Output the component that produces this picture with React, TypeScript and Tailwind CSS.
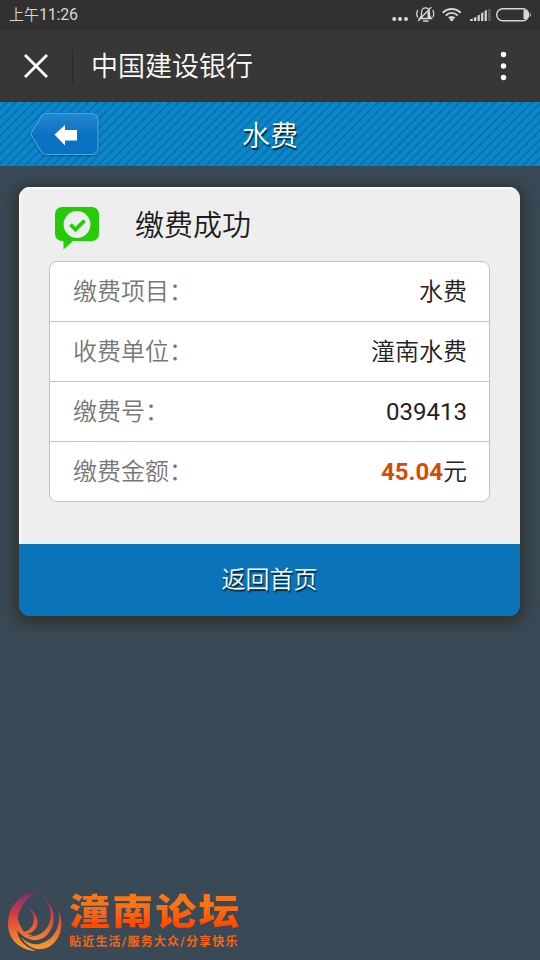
import React from 'react';

interface DetailRow {
  label: string;
  value: string;
  unit?: string;
  highlight?: boolean;
}

const rows: DetailRow[] = [
  { label: '缴费项目：', value: '水费' },
  { label: '收费单位：', value: '潼南水费' },
  { label: '缴费号：', value: '039413' },
  { label: '缴费金额：', value: '45.04', unit: '元', highlight: true },
];

function StatusBar() {
  return (
    <div className="flex h-[30px] items-center justify-between bg-[#313131] pl-[9px] pr-[7px] text-[#d8d8d8]">
      <span className="text-[15px] font-[350] leading-[30px]">
        上午<span className="text-base font-normal tracking-[-0.2px]">11:26</span>
      </span>
      <svg width="142" height="30" viewBox="0 0 142 30" fill="currentColor">
        <circle cx="3.2" cy="19" r="2" />
        <circle cx="9" cy="19" r="2" />
        <circle cx="15" cy="19" r="2" />
        <g fill="none" stroke="currentColor" strokeWidth="1.3" strokeLinecap="round">
          <path d="M28.5 18.5h12l-2-3v-3c0-3-2-4.6-4-4.6s-4 1.6-4 4.6v3zM27.5 20.5l12.5-13M32.5 21h4.5" />
          <path d="M26.5 10.5c-1 2-1 4.5 0 6.500M42 10.5c1 2 1 4.5 0 6.5" />
        </g>
        <path d="M36.5 10.5l2 2v3l2 3h-4z" />
        <g fill="none" stroke="currentColor" strokeWidth="1.9">
          <path d="M51.7 12.7c5.2-5 12.8-5 18 0" />
          <path d="M54.7 15.5c3.6-3.3 8.4-3.3 12 0" />
          <path d="M57.7 18.3c2-1.7 4-1.7 6 0" />
        </g>
        <circle cx="60.7" cy="19.5" r="1.7" />
        <path d="M79 21v-1.5l2.8-1V21zM83 21v-3.3l2.3-1V21zM86.6 21v-5.5l2.2-1V21zM90.1 21v-7.8l2.2-1.3V21z" />
        <path d="M93.6 21V11l2.2-1.2V21z" />
        <path d="M97 21V9h2.8v12z" opacity=".25" />
        <rect x="105.7" y="8.7" width="32" height="12" rx="6" fill="none" stroke="currentColor" strokeWidth="1.4" />
        <path d="M134 10.3h-1.5v8.8h1.5a3.6 4.4 0 0 0 0-8.8zM139 12.2q1.7 2.5 0 5z" />
      </svg>
    </div>
  );
}

function TitleBar() {
  return (
    <div className="flex h-[72px] items-center border-b-2 border-[#393631] bg-[#373737] pt-0.5 text-white">
      <svg className="ml-6" width="24" height="24" viewBox="0 0 24 24" stroke="currentColor" strokeWidth="2.8">
        <path d="M1 1l22 22M23 1L1 23" />
      </svg>
      <div className="ml-6 h-[35px] w-px bg-[#292929]" />
      <h1 className="ml-[18px] flex-1 pt-px text-[27px] font-[350] leading-9">中国建设银行</h1>
      <svg className="mr-8" width="9" height="30" viewBox="0 0 9 30" fill="currentColor">
        <circle cx="4.5" cy="3.5" r="2.7" />
        <circle cx="4.5" cy="15" r="2.7" />
        <circle cx="4.5" cy="26.5" r="2.7" />
      </svg>
    </div>
  );
}

function BackButton() {
  return (
    <svg width="72" height="46" viewBox="0 0 72 46" className="drop-shadow-[0_1px_1px_rgba(0,40,80,0.5)]">
      <defs>
        <linearGradient id="backFill" x1="0" y1="0" x2="0" y2="1">
          <stop offset="0" stopColor="#2787d0" />
          <stop offset="0.5" stopColor="#0b72c3" />
          <stop offset="1" stopColor="#0873c3" />
        </linearGradient>
      </defs>
      <path
        d="M17 2.5h46a6 6 0 0 1 6 6v29a6 6 0 0 1-6 6H17q-3 0-4.5-2.5L2.5 24.5q-1-1.5 0-3L12.5 5Q14 2.5 17 2.5z"
        fill="url(#backFill)"
        stroke="#48a3dc"
        strokeWidth="1.2"
      />
      <path d="M25.5 23.5L36 14v5h12v10.5H36v5z" fill="#fff" />
    </svg>
  );
}

function Header() {
  return (
    <div className="grid h-16 grid-cols-3 items-center bg-[repeating-linear-gradient(135deg,#0b87c9_0px,#0b87c9_3.6px,#0872b1_4.6px,#0872b1_5.6px,#0b87c9_6.4px)]">
      <div className="pl-[29px]">
        <BackButton />
      </div>
      <h2 className="pt-[5px] text-center text-[28px] font-[350] leading-10 text-white [text-shadow:1px_2px_1px_#00283f]">水费</h2>
    </div>
  );
}

function SuccessIcon() {
  return (
    <svg width="46" height="44" viewBox="0 0 46 44">
      <path d="M8 1h30a7 7 0 0 1 7 7v20a7 7 0 0 1-7 7H19L9.5 43.5V35H8a7 7 0 0 1-7-7V8a7 7 0 0 1 7-7z" fill="#26cb08" />
      <circle cx="23" cy="18.5" r="13.4" fill="#eee" />
      <path d="M16.5 18.5l5 5 9-9" fill="none" stroke="#26cb08" strokeWidth="3.8" />
    </svg>
  );
}

function PaymentCard() {
  return (
    <div className="ml-[19px] mr-5 mt-[21px] overflow-hidden rounded-[11px] bg-[#0b74b9] shadow-[0_3px_14px_5px_rgba(48,46,42,0.85)]">
      <div className="flex h-[357px] flex-col bg-[#eee] px-[30px] shadow-[inset_2px_2px_2px_#fafafa]">
        <div className="flex h-[74px] items-center pl-[5px] pt-[7px]">
          <SuccessIcon />
          <h3 className="-mt-0.5 ml-[35px] text-[29px] font-[350] text-[#1c1c1c]">缴费成功</h3>
        </div>
        <dl className="h-[241px] divide-y divide-[#c5c8c1] overflow-hidden rounded-lg border border-[#c0c5bc] bg-white">
          {rows.map((row) => (
            <div key={row.label} className="flex h-[60px] items-center justify-between pl-[23px] pr-[22px] text-2xl">
              <dt className="font-[350] text-[#777]">{row.label}</dt>
              <dd className={/^\d+$/.test(row.value) ? 'text-[#222]' : 'font-[350] text-[#222]'}>
                {row.highlight ? <strong className="font-bold text-[#d84b04]">{row.value}</strong> : row.value}
                {row.unit}
              </dd>
            </div>
          ))}
        </dl>
      </div>
      <button className="block h-[72px] w-full bg-[#0b74b9] text-2xl font-[350] leading-[72px] text-white [text-shadow:1px_2px_1px_#00283f]">
        返回首页
      </button>
    </div>
  );
}

function ForumLogo() {
  return (
    <div className="mt-auto flex h-[70px] pl-2">
      <svg width="56" height="62" viewBox="0 0 56 62">
        <defs>
          <linearGradient id="flame" gradientUnits="userSpaceOnUse" x1="0" y1="0" x2="0" y2="62">
            <stop offset="0" stopColor="#663078" />
            <stop offset="0.4" stopColor="#d63c42" />
            <stop offset="0.7" stopColor="#ef7130" />
            <stop offset="1" stopColor="#f5a62d" />
          </linearGradient>
        </defs>
        <g fill="url(#flame)">
          <path d="M27 4c-2-3-7-3-9 0C7 9 0 21 0 34c0 15 11 26 28 27C17 57 10 50 9 40c4 6 10 8 16 5-6 0-10-3-12-8C11 33 10 30 10 27 12 17 18 8 27 4z" />
          <path d="M18 17c7 3 9 10 7 17-2 5-6 8-11 8 3 2 7 2 10 0 6-4 7-10 4-16-2-5-6-8-10-9z" />
          <path d="M32 4c4 3 7 7 9 12 3 8 2 17-3 23-6 7-16 10-25 5 8 8 19 8 26 1 7-8 8-17 5-26-3-7-7-12-12-15z" />
          <path d="M50 19c4 17-4 32-19 35-7 1-13-2-18-7 7 13 22 16 32 7 9-8 11-23 5-35z" />
        </g>
      </svg>
      <div className="ml-[5px]">
        <div className="scale-y-88 bg-linear-to-b from-[#f77718] from-25% to-[#ff4800] to-80% bg-clip-text text-[41px] font-black leading-[46px] tracking-[2.2px] text-transparent">
          潼南论坛
        </div>
        <div className="-mt-px whitespace-nowrap text-[12px] font-bold leading-[14px] tracking-[1.2px] text-[#f8650f]">
          贴近生活/服务大众/分享快乐
        </div>
      </div>
    </div>
  );
}

export default function App() {
  return (
    <div className="flex h-[960px] w-[540px] flex-col overflow-hidden bg-[#394956] font-[Roboto,'Noto_Sans_CJK_SC',sans-serif]">
      <StatusBar />
      <TitleBar />
      <Header />
      <PaymentCard />
      <ForumLogo />
    </div>
  );
}
